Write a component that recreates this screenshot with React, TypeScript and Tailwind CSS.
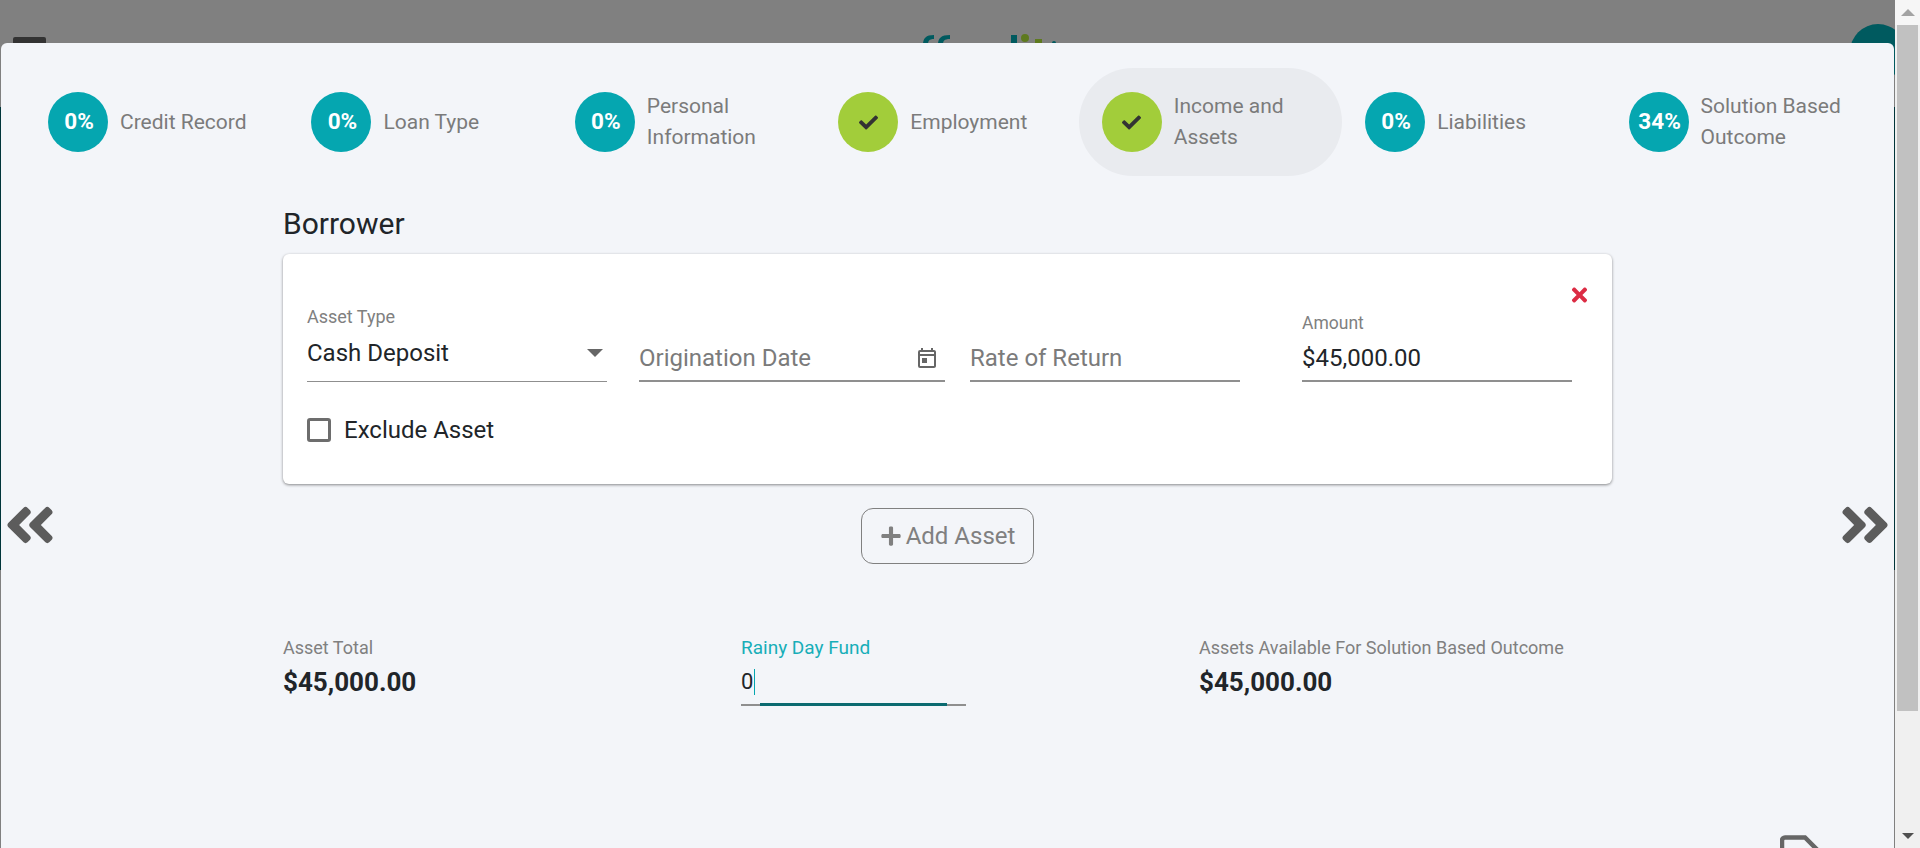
import { FaAngleDoubleLeft, FaAngleDoubleRight, FaCheck, FaPlus, FaTimes } from "react-icons/fa";
import { MdOutlineToday } from "react-icons/md";

const steps = [
  { label: "Credit Record", value: "0%" },
  { label: "Loan Type", value: "0%" },
  { label: "Personal Information", value: "0%" },
  { label: "Employment", done: true },
  { label: "Income and Assets", done: true, active: true },
  { label: "Liabilities", value: "0%" },
  { label: "Solution Based Outcome", value: "34%" },
];

function Step({ label, value, done, active }: { label: string; value?: string; done?: boolean; active?: boolean }) {
  return (
    <div className={`flex h-[108px] items-center gap-3 rounded-full px-[23px] ${active ? "bg-[#e9ebef]" : ""}`}>
      <div
        className={`flex h-[60px] w-[60px] shrink-0 items-center justify-center rounded-full ${
          done ? "bg-[#a2cd3a] text-[#333333]" : "bg-[#05a6b0] text-white"
        }`}
      >
        {done ? <FaCheck className="h-[19px] w-[19px]" /> : <span className="ml-[2px] text-[22.5px] font-bold">{value}</span>}
      </div>
      <span className="text-[21px] leading-[31px] text-[#7b7b7b]">{label}</span>
    </div>
  );
}

// underlined text field, label sits above the value
function Field({ width, label, value, placeholder, icon }: { width: string; label?: string; value?: string; placeholder?: string; icon?: boolean }) {
  return (
    <div className={`shrink-0 ${width}`}>
      {label && <div className="mb-[13px] text-[17.5px] leading-[20px] text-[#808080]">{label}</div>}
      <div className="flex h-[36px] items-center justify-between border-b-2 border-[#8f8f8f] pb-[10px]">
        <span className={`text-[24px] leading-[26px] ${value ? "text-[#212529]" : "text-[#7b7b7b]"}`}>{value ?? placeholder}</span>
        {icon && <MdOutlineToday className="mr-[6px] mt-[2px] h-[24px] w-[24px] shrink-0 text-[#666666]" />}
      </div>
    </div>
  );
}

function Total({ label, value }: { label: string; value: string }) {
  return (
    <div className="w-[458px] shrink-0">
      <div className="text-[18px] leading-[24px] text-[#808080]">{label}</div>
      <div className="mt-[5px] text-[26px] font-bold leading-[34px] text-[#212529]">{value}</div>
    </div>
  );
}

export default function App() {
  return (
    <div className="flex h-screen overflow-hidden font-['Roboto',sans-serif]">
      {/* page behind the dialog */}
      <div className="relative w-[1895px] shrink-0 overflow-hidden bg-[#808080]">
        <header className="flex h-[107px] items-start">
          <div className="ml-[13px] mt-[37px] h-[6px] w-[33px] rounded-t-[2px] bg-[#333333]" />
          <svg className="ml-[874px] mt-[33px]" width="140" height="12" viewBox="0 0 140 12">
            <path d="M3 12C3 5 6 2 14 2V6C9 6 8 8 8 12ZM18 12C18 5 21 2 30 2V6C24 6 23 8 23 12Z" fill="#005a5f" />
            <rect x="91" y="2" width="6" height="10" fill="#005a5f" />
            <circle cx="105" cy="5" r="4" fill="#5e7a1f" />
            <rect x="115" y="6" width="7" height="6" fill="#5e7a1f" />
            <circle cx="134" cy="10" r="2" fill="#005a5f" />
          </svg>
          <div className="ml-auto mr-[-11px] mt-[24px] h-[56px] w-[56px] shrink-0 rounded-full bg-[#005a5f]" />
        </header>
        <div className="h-[463px] bg-[#00353a]" />

        {/* dialog */}
        <div className="absolute bottom-0 left-[1px] right-[1px] top-[43px] overflow-hidden rounded-t-[6px] bg-[#f3f5f9]">
          <div className="grid grid-cols-7 pl-[24px] pr-[25px] pt-[25px]">
            {steps.map((s) => (
              <Step key={s.label} {...s} />
            ))}
          </div>

          <div className="ml-[282px] w-[1329px]">
            <h2 className="mt-[30px] text-[30px] font-normal leading-[35px] text-[#212529]">Borrower</h2>

            <div className="relative mt-[13px] h-[230px] rounded-[6px] bg-white px-[24px] shadow-[0_1px_3px_rgba(0,0,0,0.45)]">
              <FaTimes className="absolute right-[22px] top-[30px] h-[22px] w-[21px] text-[#dc2c44]" />
              <div className="flex h-[128px] items-end">
                <div className="w-[300px] shrink-0">
                  <div className="mb-[12px] text-[18px] leading-[20px] text-[#808080]">Asset Type</div>
                  <div className="flex h-[43px] items-start justify-between border-b border-[#8f8f8f]">
                    <span className="text-[24px] leading-[28px] text-[#212529]">Cash Deposit</span>
                    <span className="mr-[4px] mt-[10px] h-0 w-0 border-x-[8px] border-t-[8px] border-x-transparent border-t-[#666666]" />
                  </div>
                </div>
                <Field width="ml-[32px] w-[306px]" placeholder="Origination Date" icon />
                <Field width="ml-[25px] w-[270px]" placeholder="Rate of Return" />
                <Field width="ml-[62px] w-[270px]" label="Amount" value="$45,000.00" />
              </div>
              <div className="mt-[34px] flex items-center gap-[13px]">
                <div className="h-[24px] w-[24px] rounded-[3px] border-[3px] border-[#6d6d6d]" />
                <span className="text-[24px] leading-[28px] text-[#212529]">Exclude Asset</span>
              </div>
            </div>

            <div className="ml-[578px] mt-[24px] flex h-[56px] w-[173px] items-center justify-center gap-[4px] rounded-[12px] border border-[#808080] text-[#808080]">
              <FaPlus className="h-[22px] w-[22px]" />
              <span className="text-[24px]">Add Asset</span>
            </div>

            <div className="mt-[72px] flex">
              <Total label="Asset Total" value="$45,000.00" />
              <div className="w-[458px] shrink-0">
                <div className="text-[19px] leading-[24px] text-[#17aeb8]">Rainy Day Fund</div>
                <div className="relative mt-[6px] h-[40px] w-[225px] border-b-2 border-[#8f8f8f]">
                  <span className="flex items-center text-[22px] leading-[32px] text-[#212529]">
                    0<span className="ml-[1px] h-[26px] w-[1px] bg-[#05a6b0]" />
                  </span>
                  <div className="absolute bottom-[-2px] left-[19px] right-[19px] h-[3px] bg-[#0b6a70]" />
                </div>
              </div>
              <Total label="Assets Available For Solution Based Outcome" value="$45,000.00" />
            </div>

            {/* save icon, cut off by the bottom of the window */}
            <svg className="ml-[1497px] mt-[129px]" width="40" height="40" viewBox="0 0 40 40" fill="none">
              <path d="M5 2.5H25L37 14.5V35a3 3 0 0 1-3 3H5a3 3 0 0 1-3-3V5.5a3 3 0 0 1 3-3Z" stroke="#666666" strokeWidth="4.5" />
            </svg>
          </div>

          <FaAngleDoubleLeft className="absolute left-[3px] top-[453px] h-[58px] w-[52px] text-[#5c5c5c]" />
          <FaAngleDoubleRight className="absolute right-[3px] top-[453px] h-[58px] w-[52px] text-[#5c5c5c]" />
        </div>
      </div>

      {/* scrollbar */}
      <div className="flex w-[25px] shrink-0 flex-col bg-[#f0f0f0]">
        <div className="flex h-[25px] items-center justify-center bg-[#f6f6f6]">
          <span className="h-0 w-0 border-x-[7px] border-b-[7px] border-x-transparent border-b-[#a3a3a3]" />
        </div>
        <div className="mx-[2px] h-[686px] bg-[#c1c1c1]" />
        <div className="flex-1" />
        <div className="flex h-[25px] items-center justify-center">
          <span className="h-0 w-0 border-x-[6px] border-t-[6px] border-x-transparent border-t-[#505050]" />
        </div>
      </div>
    </div>
  );
}
